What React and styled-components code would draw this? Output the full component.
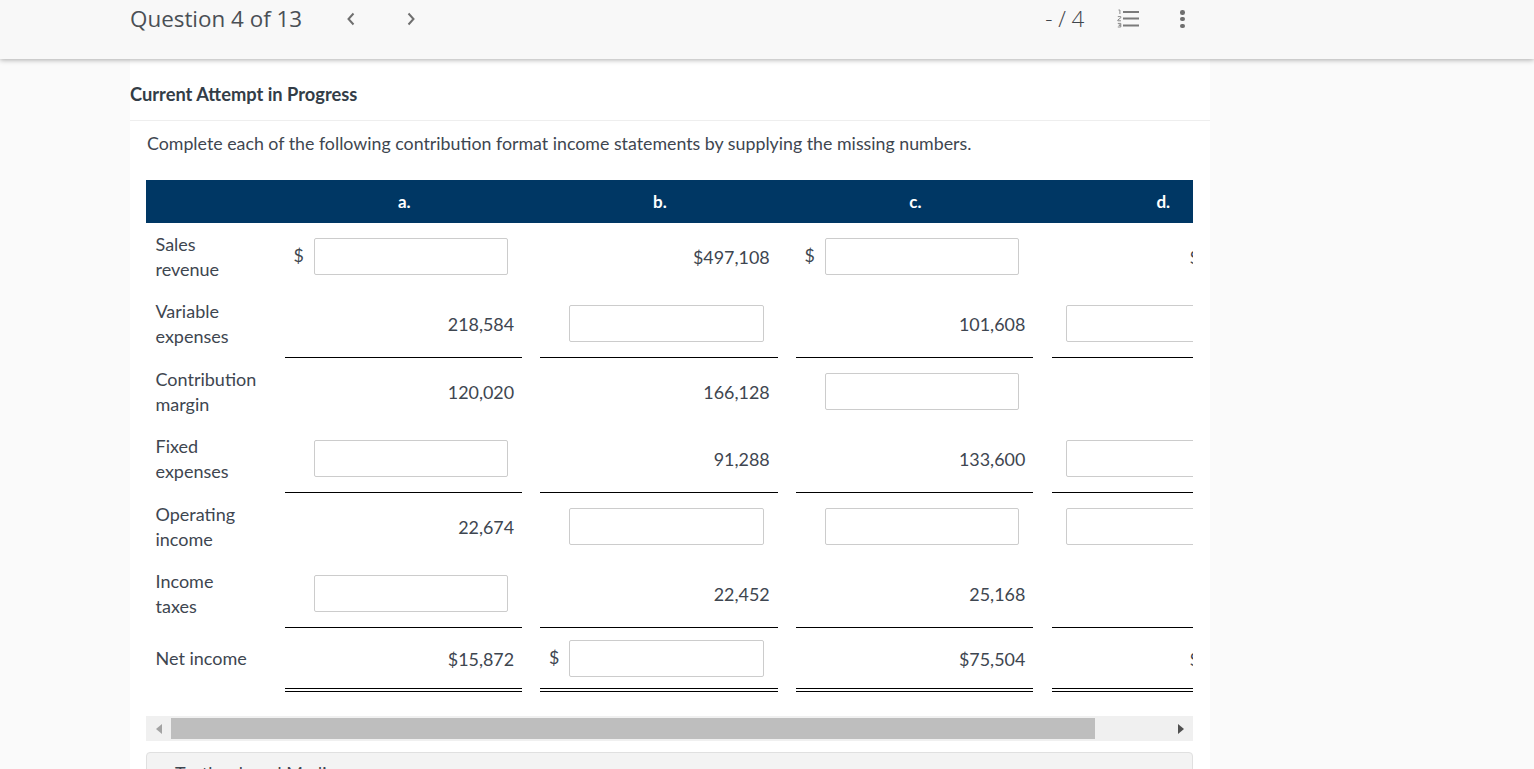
import React from "react";
import styled, { createGlobalStyle } from "styled-components";

const COLUMNS = "130.5px 255.6px 255.6px 255.6px 240px";

const rows = [
  {
    label: ["Sales", "revenue"],
    cells: [
      { input: true, dollar: true },
      { value: "$497,108" },
      { input: true, dollar: true },
      { value: "$", last: true },
    ],
  },
  {
    label: ["Variable", "expenses"],
    cells: [
      { value: "218,584", rule: "single" },
      { input: true, rule: "single" },
      { value: "101,608", rule: "single" },
      { input: true, rule: "single" },
    ],
  },
  {
    label: ["Contribution", "margin"],
    cells: [{ value: "120,020" }, { value: "166,128" }, { input: true }, {}],
  },
  {
    label: ["Fixed", "expenses"],
    cells: [
      { input: true, rule: "single" },
      { value: "91,288", rule: "single" },
      { value: "133,600", rule: "single" },
      { input: true, rule: "single" },
    ],
  },
  {
    label: ["Operating", "income"],
    cells: [{ value: "22,674" }, { input: true }, { input: true }, { input: true }],
  },
  {
    label: ["Income", "taxes"],
    cells: [
      { input: true, rule: "single" },
      { value: "22,452", rule: "single" },
      { value: "25,168", rule: "single" },
      { rule: "single" },
    ],
  },
  {
    label: ["Net income"],
    total: true,
    cells: [
      { value: "$15,872", rule: "double" },
      { input: true, dollar: true, rule: "double" },
      { value: "$75,504", rule: "double" },
      { value: "$", last: true, rule: "double" },
    ],
  },
];

function ListIcon() {
  return (
    <svg width="22" height="19" viewBox="0 0 22 19" fill="none">
      <path d="M1.5 1h1.4v4" stroke="#8a8a8a" strokeWidth="1" />
      <path d="M0.8 7.6h3v1.2l-3 2.2v.8h3.2" stroke="#8a8a8a" strokeWidth="1" />
      <path d="M0.8 14.4h3v1.8h-2h2v1.8h-3" stroke="#8a8a8a" strokeWidth="1" />
      <path
        d="M6 3h16M6 9.6h16M6 16.4h16"
        stroke="#7b7b7b"
        strokeWidth="2"
      />
    </svg>
  );
}

function Chevron({ dir }) {
  return (
    <svg width="10" height="14" viewBox="0 0 10 14" fill="none">
      <path
        d={dir === "left" ? "M7.5 1.5L2.5 7l5 5.5" : "M2.5 1.5L7.5 7l-5 5.5"}
        stroke="#6f6f6f"
        strokeWidth="2"
      />
    </svg>
  );
}

function Cell({ cell, isLast }) {
  return (
    <CellWrap $isLast={isLast}>
      <CellBody $rule={cell.rule} $isLast={isLast}>
        {cell.input && (
          <>
            {cell.dollar && <Dollar>$</Dollar>}
            <AnswerInput type="text" />
          </>
        )}
        {cell.value && (
          <Value $last={cell.last} $rule={cell.rule}>
            {cell.value}
          </Value>
        )}
      </CellBody>
    </CellWrap>
  );
}

export default function App() {
  return (
    <>
      <GlobalStyle />
      <TopBar>
        <QuestionTitle>Question 4 of 13</QuestionTitle>
        <PrevButton>
          <Chevron dir="left" />
        </PrevButton>
        <NextButton>
          <Chevron dir="right" />
        </NextButton>
        <Score>- / 4</Score>
        <ListButton>
          <ListIcon />
        </ListButton>
        <MoreButton>
          <Dot />
          <Dot />
          <Dot />
        </MoreButton>
      </TopBar>

      <Panel>
        <PanelTitle>Current Attempt in Progress</PanelTitle>
        <PanelBody>
          <Instructions>
            Complete each of the following contribution format income statements
            by supplying the missing numbers.
          </Instructions>

          <TableClip>
            <HeaderRow>
              <span />
              <HeaderCell>a.</HeaderCell>
              <HeaderCell>b.</HeaderCell>
              <HeaderCell>c.</HeaderCell>
              <HeaderCell>d.</HeaderCell>
            </HeaderRow>
            {rows.map((row) => (
              <Row key={row.label[0]} $total={row.total}>
                <RowLabel $total={row.total}>
                  {row.label.map((line) => (
                    <div key={line}>{line}</div>
                  ))}
                </RowLabel>
                {row.cells.map((cell, i) => (
                  <Cell key={i} cell={cell} isLast={i === 3} />
                ))}
              </Row>
            ))}
          </TableClip>

          <ScrollTrack>
            <ScrollArrow>
              <LeftTriangle />
            </ScrollArrow>
            <ScrollThumb />
            <ScrollArrowEnd>
              <RightTriangle />
            </ScrollArrowEnd>
          </ScrollTrack>

          <MediaCard>
            <MediaTitle>Textbook and Media</MediaTitle>
          </MediaCard>
        </PanelBody>
      </Panel>
    </>
  );
}

const GlobalStyle = createGlobalStyle`
  html, body {
    margin: 0;
    height: 769px;
    overflow: hidden;
    background: #fafafa;
  }
  body {
    font-family: Lato, "Liberation Sans", sans-serif;
    color: #3e4650;
  }
`;

const TopBar = styled.div`
  position: relative;
  z-index: 2;
  display: flex;
  align-items: flex-start;
  height: 59px;
  padding-left: 130px;
  background: #f8f8f8;
  box-shadow: 0 1px 5px rgba(0, 0, 0, 0.32);
`;

const QuestionTitle = styled.div`
  width: 172px;
  font: 400 22.4px/37px "Open Sans", sans-serif;
  color: #4a4f55;
  white-space: nowrap;
`;

const PrevButton = styled.div`
  display: flex;
  margin: 12px 0 0 44px;
`;

const NextButton = styled.div`
  display: flex;
  margin: 12px 0 0 50px;
`;

const Score = styled.div`
  margin-left: auto;
  font: 300 22.4px/37px "Open Sans", sans-serif;
  color: #3f454c;
  white-space: nowrap;
`;

const ListButton = styled.div`
  display: flex;
  margin: 9px 0 0 33px;
`;

const MoreButton = styled.div`
  display: flex;
  flex-direction: column;
  gap: 2.2px;
  margin: 10px 349px 0 41px;
`;

const Dot = styled.span`
  width: 4.6px;
  height: 4.6px;
  border-radius: 50%;
  background: #6f6f6f;
`;

const Panel = styled.div`
  width: 1080px;
  height: 710px;
  margin-left: 130px;
  background: #fff;
`;

const PanelTitle = styled.div`
  height: 62px;
  padding-top: 24px;
  box-sizing: border-box;
  border-bottom: 1px solid #eeeeee;
  font: 700 18.3px/22px Lato, sans-serif;
  color: #333d47;
`;

const PanelBody = styled.div`
  padding: 0 17px 0 16px;
`;

const Instructions = styled.div`
  padding: 10px 0 25px 1px;
  font: 400 17.8px/24px Lato, sans-serif;
  color: #3e4650;
  white-space: nowrap;
`;

const TableClip = styled.div`
  width: 1047px;
  overflow: hidden;
`;

const HeaderRow = styled.div`
  display: grid;
  grid-template-columns: ${COLUMNS};
  height: 43px;
  align-items: center;
  background: #003764;
`;

const HeaderCell = styled.div`
  text-align: center;
  font: 700 17px/20px Lato, sans-serif;
  color: #fff;
`;

const Row = styled.div`
  display: grid;
  grid-template-columns: ${COLUMNS};
  height: ${(p) => (p.$total ? "64px" : "67.5px")};
`;

const RowLabel = styled.div`
  align-self: center;
  padding-left: 9.5px;
  padding-bottom: ${(p) => (p.$total ? "4px" : "0")};
  font: 400 18px/25px Lato, sans-serif;
  color: #3e4650;
`;

const CellWrap = styled.div`
  padding: 0 ${(p) => (p.$isLast ? "0" : "10px")} 0 8.4px;
  min-width: 0;
`;

const CellBody = styled.div`
  position: relative;
  box-sizing: border-box;
  display: flex;
  align-items: center;
  justify-content: flex-end;
  height: 100%;
  padding-right: ${(p) => (p.$isLast ? "22.5px" : "14px")};
  padding-top: ${(p) => (p.$rule === "single" ? "0" : "1px")};
  border-bottom: ${(p) =>
    p.$rule === "double"
      ? "4px double #000"
      : p.$rule === "single"
      ? "1px solid #000"
      : "1px solid transparent"};
`;

const Dollar = styled.span`
  position: absolute;
  left: 8.5px;
  top: 50%;
  transform: translateY(-54%);
  font: 400 17.8px/24px Lato, sans-serif;
  color: #3e4650;
`;

const AnswerInput = styled.input`
  box-sizing: border-box;
  width: 194.6px;
  height: 37px;
  padding: 0 8px;
  background: #fff;
  border: 1px solid #cccccc;
  border-radius: 2px;
  outline: none;
  flex-shrink: 0;
`;

const Value = styled.div`
  padding-right: ${(p) => (p.$last ? "67px" : "0")};
  margin: ${(p) => (p.$rule === "single" ? "1px" : "0")} -6px 0 0;
  font: 400 17.9px/24px Lato, sans-serif;
  color: #3e4650;
`;

const ScrollTrack = styled.div`
  display: flex;
  align-items: center;
  width: 1047px;
  height: 25px;
  margin-top: 24px;
  background: #f0f0f0;
`;

const ScrollArrow = styled.div`
  display: flex;
  justify-content: center;
  width: 25px;
`;

const ScrollArrowEnd = styled(ScrollArrow)`
  margin-left: auto;
`;

const LeftTriangle = styled.span`
  width: 0;
  height: 0;
  border-top: 5.5px solid transparent;
  border-bottom: 5.5px solid transparent;
  border-right: 6px solid #a3a3a3;
`;

const RightTriangle = styled.span`
  width: 0;
  height: 0;
  border-top: 5.5px solid transparent;
  border-bottom: 5.5px solid transparent;
  border-left: 6px solid #505050;
`;

const ScrollThumb = styled.div`
  width: 924px;
  height: 21px;
  background: #bebebe;
`;

const MediaCard = styled.div`
  box-sizing: border-box;
  width: 1047px;
  height: 60px;
  margin-top: 11px;
  padding: 8px 0 0 28px;
  background: #f3f3f3;
  border: 1px solid #e0e0e0;
  border-radius: 4px;
`;

const MediaTitle = styled.div`
  font: 400 18px/24px Lato, sans-serif;
  color: #3e4650;
`;
